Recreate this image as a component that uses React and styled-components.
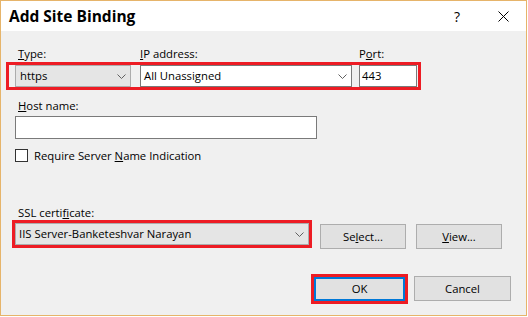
import React from 'react';
import styled, { createGlobalStyle } from 'styled-components';

const GlobalStyle = createGlobalStyle`
  html, body { margin: 0; padding: 0; background: #ffffff; }
  body { font-family: "Open Sans", "Noto Sans", sans-serif; color: #000; }
  #root { width: 528px; height: 317px; }
`;

const Window = styled.div`
  width: 527px;
  height: 316px;
  box-sizing: border-box;
  border: 1px solid #e6b46a;
  background: #f0f0f0;
  display: flex;
  flex-direction: column;
`;

const TitleBar = styled.div`
  flex: none;
  height: 30px;
  background: #ffffff;
  display: flex;
  align-items: center;
  padding-left: 8px;
`;

const Title = styled.div`
  font-size: 15.5px;
  font-weight: 700;
  color: #000;
  flex: 1;
`;

const CaptionButton = styled.div`
  width: 46px;
  height: 30px;
  display: flex;
  align-items: center;
  justify-content: center;
  font-size: 14px;
  color: #000;
`;

const Body = styled.div`
  flex: 1;
  display: flex;
  flex-direction: column;
  padding: 15px 15px 0 14px;
  font-size: 11.3px;
  line-height: 15px;
`;

const LabelRow = styled.div`
  display: flex;
`;

const Label = styled.div`
  width: ${(p) => (p.$w ? `${p.$w}px` : 'auto')};
  padding-left: ${(p) => p.$indent || 0}px;
  margin-top: ${(p) => p.$mt || 0}px;
  box-sizing: border-box;
  white-space: nowrap;
`;

const Highlight = styled.div`
  align-self: flex-start;
  display: flex;
  border: 3px solid #ed1c24;
  margin-left: ${(p) => p.$ml || 0}px;
  margin-top: ${(p) => p.$mt || 0}px;
  padding: ${(p) => p.$pad || '0'};
`;

const Combo = styled.div`
  width: ${(p) => p.$w}px;
  height: 22px;
  box-sizing: border-box;
  border: 1px solid ${(p) => (p.$editable ? '#7a7a7a' : '#acacac')};
  background: ${(p) => (p.$editable ? '#ffffff' : '#e5e5e5')};
  display: flex;
  align-items: center;
  padding-left: ${(p) => p.$pl || 3}px;
  padding-right: 4px;
  margin-left: ${(p) => p.$ml || 0}px;
  white-space: nowrap;
`;

const ComboText = styled.span`
  flex: 1;
  margin-top: -1px;
`;

const TextBox = styled.div`
  width: ${(p) => p.$w}px;
  height: ${(p) => p.$h || 22}px;
  box-sizing: border-box;
  border: 1px solid #7a7a7a;
  background: #ffffff;
  display: flex;
  align-items: center;
  padding-left: 2px;
  padding-bottom: 1px;
  margin-top: ${(p) => p.$mt || 0}px;
  margin-left: ${(p) => p.$ml || 0}px;
`;

const CheckRow = styled.label`
  display: flex;
  align-items: center;
  gap: 6px;
  margin-top: 9px;
`;

const CheckBox = styled.span`
  width: 13px;
  height: 13px;
  box-sizing: border-box;
  border: 1px solid #333333;
  background: #ffffff;
`;

const SslRow = styled.div`
  display: flex;
  align-items: flex-start;
`;

const Button = styled.div`
  width: ${(p) => p.$w}px;
  height: ${(p) => p.$h || 25}px;
  box-sizing: border-box;
  margin-left: ${(p) => p.$ml || 0}px;
  margin-top: ${(p) => p.$mt || 0}px;
  border: ${(p) => (p.$default ? '2px solid #0078d7' : '1px solid #adadad')};
  background: #e1e1e1;
  display: flex;
  align-items: center;
  justify-content: center;
  white-space: nowrap;
  padding-bottom: 1px;
`;

const ButtonRow = styled.div`
  display: flex;
  justify-content: flex-end;
  align-items: flex-start;
  margin-top: 25px;
`;

const Chevron = () => (
  <svg width="9" height="5" viewBox="0 0 9 5">
    <polyline points="0.5,0.5 4.5,4.5 8.5,0.5" fill="none" stroke="#606060" strokeWidth="1" />
  </svg>
);

const CloseIcon = () => (
  <svg width="11" height="11" viewBox="0 0 11 11">
    <line x1="0.5" y1="0.5" x2="10.5" y2="10.5" stroke="#000" strokeWidth="1" />
    <line x1="10.5" y1="0.5" x2="0.5" y2="10.5" stroke="#000" strokeWidth="1" />
  </svg>
);

export default function App() {
  return (
    <>
      <GlobalStyle />
      <Window>
        <TitleBar>
          <Title>Add Site Binding</Title>
          <CaptionButton>?</CaptionButton>
          <CaptionButton>
            <CloseIcon />
          </CaptionButton>
        </TitleBar>
        <Body>
          <LabelRow>
            <Label $w={125} $indent={3}>
              <u>T</u>ype:
            </Label>
            <Label $w={219}>
              <u>I</u>P address:
            </Label>
            <Label>
              P<u>o</u>rt:
            </Label>
          </LabelRow>
          <Highlight $ml={-9} $mt={1} $pad="0 1px 0 6px">
            <Combo $w={116} $pl={4}>
              <ComboText>https</ComboText>
              <Chevron />
            </Combo>
            <Combo $w={212} $editable $ml={9}>
              <ComboText>All Unassigned</ComboText>
              <Chevron />
            </Combo>
            <TextBox $w={58} $ml={7}>
              443
            </TextBox>
          </Highlight>

          <Label $indent={3} $mt={8}>
            <u>H</u>ost name:
          </Label>
          <TextBox $w={302} $h={23} $mt={3} />

          <CheckRow>
            <CheckBox />
            <span>
              Require Server <u>N</u>ame Indication
            </span>
          </CheckRow>

          <Label $indent={3} $mt={42}>
            SSL certi<u>f</u>icate:
          </Label>
          <SslRow>
            <Highlight $ml={-3}>
              <Combo $w={294}>
                <ComboText>IIS Server-Banketeshvar Narayan</ComboText>
                <Chevron />
              </Combo>
            </Highlight>
            <Button $w={86} $ml={8} $mt={4}>
              Se<u>l</u>ect...
            </Button>
            <Button $w={86} $ml={10} $mt={4}>
              <u>V</u>iew...
            </Button>
          </SslRow>

          <ButtonRow>
            <Highlight>
              <Button $w={91} $h={24} $default>
                OK
              </Button>
            </Highlight>
            <Button $w={97} $ml={6} $mt={2}>
              Cancel
            </Button>
          </ButtonRow>
        </Body>
      </Window>
    </>
  );
}
